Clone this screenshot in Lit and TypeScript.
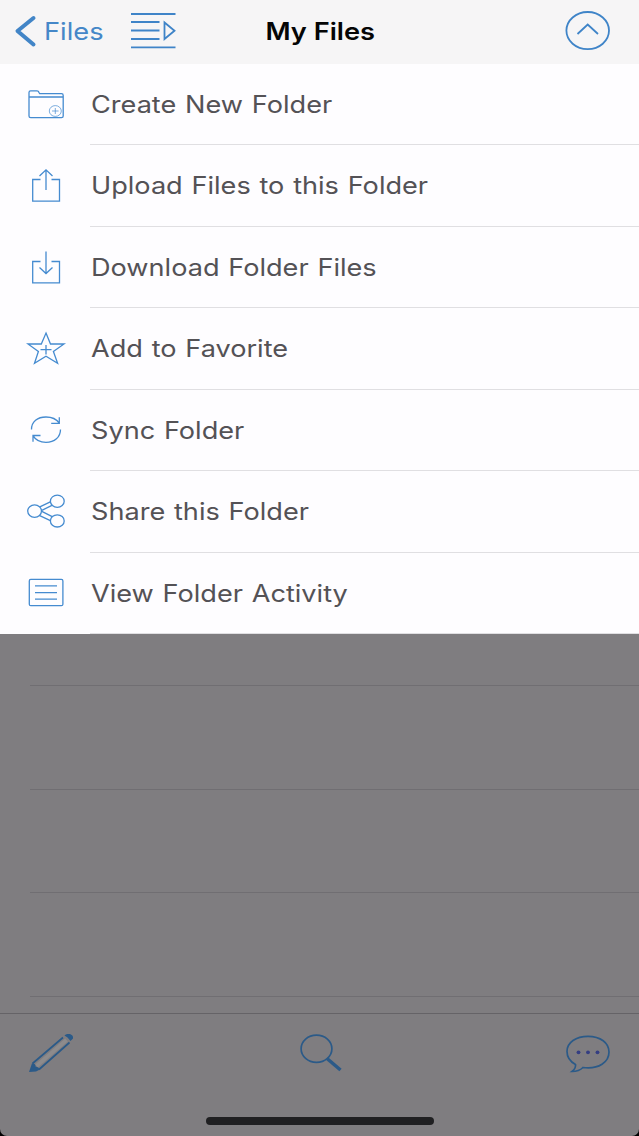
import { LitElement, html, css, svg } from 'lit';
import { customElement, property } from 'lit/decorators.js';

const icons: Record<string, unknown> = {
  create: svg`<path d="M29 97.500V92Q29 90.400 30.600 90.400H37Q38.500 90.400 39 92L39.700 93.200H61.500Q63.200 93.200 63.200 95V115.500Q63.200 117.200 61.500 117.200H30.700Q29 117.200 29 115.500ZM29 96.500H63.200"/><g stroke-width=".7"><ellipse cx="55.300" cy="110.500" rx="6" ry="5.400"/><path d="M52 110.500H58.600M55.300 107.500V113.500"/></g>`,
  upload: svg`<path d="M40.500 98H32.700V119.600H59.500V98H51.500M46 108.500V88.500M39.500 94.500L46 88.300L52.500 94.500"/>`,
  download: svg`<path d="M40.500 98H32.700V119.300H59.500V98H51.500M46 88V109.800M39.500 104L46 110L52.500 104"/>`,
  favorite: svg`<path d="M46 88.600L50.500 99.500H64L53.400 107L57.600 118.700L46 111.800L34.500 118.700L38.400 107L28 99.500H41.300ZM40.500 105.200H51.500M46 100.500V110"/>`,
  sync: svg`<path d="M31.500 103C31.500 95.200 37.500 90.500 46 90.500C52 90.500 56.500 92.700 59.300 96.700M59.300 90.700V96.900H51.200M60.500 103C60.500 110.700 54.500 115.900 46 115.900C40 115.900 35.500 113.500 33 109.200M33 115.200V109H40.500"/>`,
  share: svg`<g transform="translate(0 -.600)"><ellipse cx="34.600" cy="104.200" rx="6.900" ry="6.200"/><ellipse cx="57.300" cy="94.300" rx="6.900" ry="6.100"/><ellipse cx="57.300" cy="114" rx="6.900" ry="6.100"/><path d="M39.800 99.900L50.300 94.900M41.300 103.700L51.900 98.500M41.300 104.200L52.200 109.800M39.700 108.700L50.400 113.700"/></g>`,
  activity: svg`<rect x="29.300" y="89.900" width="33.600" height="26.300" rx="1.500"/><path d="M35 96.400H57M35 103.100H57M35 109.700H57"/>`,
};

const actions = [
  ['create', 'Create New Folder'],
  ['upload', 'Upload Files to this Folder'],
  ['download', 'Download Folder Files'],
  ['favorite', 'Add to Favorite'],
  ['sync', 'Sync Folder'],
  ['share', 'Share this Folder'],
  ['activity', 'View Folder Activity'],
];

@customElement('action-row')
export class ActionRow extends LitElement {
  @property() icon = '';
  @property() label = '';

  static styles = css`
    :host { display: flex; height: 81.5px; align-items: stretch; }
    .icon { flex: none; width: 90px; height: 80px; fill: none; stroke: #458bd0; stroke-width: 1.3; }
    .cell { flex: 1; display: flex; align-items: center; box-sizing: border-box; padding: 2px 0 0 1px; border-bottom: 1px solid #e0dfe2; }
    .label { color: #545256; font-size: 24px; line-height: 30px; word-spacing: 1px; white-space: nowrap; transform: scaleX(1.13); transform-origin: left; }
  `;

  render() {
    return html`
      <svg class="icon" viewBox="0 63.500 90 80">${icons[this.icon]}</svg>
      <div class="cell"><span class="label">${this.label}</span></div>`;
  }
}

@customElement('app-root')
export class AppRoot extends LitElement {
  static styles = css`
    :host { display: block; height: 1136px; overflow: hidden; background: #000; font-family: Inter, "Liberation Sans", sans-serif; }
    .screen { display: flex; flex-direction: column; height: 1136px; background: #7f7d80; border-radius: 0 0 7px 7px; overflow: hidden; }
    .nav { flex: none; height: 63.7px; display: grid; grid-template-columns: 1fr auto 1fr; background: #f6f5f6; }
    .left { display: flex; }
    .chevron { width: 44px; height: 63px; fill: none; stroke: #4285c7; stroke-width: 4; stroke-linecap: round; stroke-linejoin: round; }
    .back { width: 86px; color: #4587c8; font-size: 24px; line-height: 63.5px; }
    .back span, .title span { display: inline-block; transform: scaleX(1.135); transform-origin: left; }
    .queue { width: 48px; height: 63px; fill: none; stroke: #3f84c8; stroke-width: 1.8; }
    .title { color: #050505; font-size: 24px; font-weight: 600; line-height: 63.5px; padding-left: 1px; }
    .title span { transform-origin: center; }
    .collapse { width: 52px; height: 63px; justify-self: end; margin-right: 25px; fill: none; stroke: #3f84c8; stroke-width: 1.8; }
    .menu { flex: none; background: #fefdff; }
    .files { flex: 1; overflow: hidden; padding-left: 30px; }
    .file { height: 103.5px; box-sizing: border-box; border-bottom: 1px solid #706e72; }
    .file:first-child { height: 52px; }
    .toolbar { flex: none; height: 123px; box-sizing: border-box; border-top: 1px solid #656367; display: flex; flex-direction: column; }
    .tools { display: flex; justify-content: space-between; height: 80px; }
    .tool { width: 100px; height: 80px; fill: none; stroke: #2b5a88; stroke-width: 1.7; }
    .fill { fill: #2b5a88; }
    .home { width: 228px; height: 8px; margin: 23px auto 0; border-radius: 4px; background: #202022; }
  `;

  render() {
    return html`
      <div class="screen">
        <header class="nav">
          <div class="left">
            <svg class="chevron" viewBox="0 0 44 63"><path d="M33.500 18L17.500 31L33.500 44.500"/></svg>
            <div class="back"><span>Files</span></div>
            <svg class="queue" viewBox="130 0 48 63"><path d="M131 14H175.500M131 22H159.500M131 30.500H159.500M131 39H159.500M131 47.300H175.500M164.500 22.500V39L174.500 30.700Z"/></svg>
          </div>
          <div class="title"><span>My Files</span></div>
          <svg class="collapse" viewBox="562 0 52 63"><ellipse cx="587.700" cy="30.600" rx="21.300" ry="18.600"/><path d="M577.500 34L587.700 24.500L598 34"/></svg>
        </header>
        <nav class="menu">${actions.map(([icon, label]) => html`<action-row .icon=${icon} .label=${label}></action-row>`)}</nav>
        <main class="files">${[0, 1, 2, 3].map(() => html`<div class="file"></div>`)}</main>
        <footer class="toolbar">
          <div class="tools">
            <svg class="tool" viewBox="0 1014 100 80"><path stroke="#8d8b8c" stroke-width="4" d="M36.500 1066L66.500 1040"/><path d="M32.500 1063.500L63 1037.500M39 1069.500L69.500 1042.500"/><path class="fill" stroke="none" d="M29 1072L32 1063.300Q36 1063.500 35.500 1066.500Q39 1067 39.500 1069.800L36 1071.500ZM64.500 1035.500C68 1032.500 74 1034.500 73 1038.500L70.500 1041Q67.500 1036.500 64.500 1035.500Z"/></svg>
            <svg class="tool" viewBox="269.500 1014 100 80"><ellipse cx="316" cy="1048.700" rx="15.400" ry="13.600"/><path stroke-width="3.500" d="M326.500 1058.500L340 1070"/></svg>
            <svg class="tool" viewBox="539 1014 100 80"><path d="M575.500 1064.500C570 1061.500 567 1057 567 1051.500C567 1042.500 576 1036.300 588 1036.300C600.500 1036.300 609 1043 609 1052C609 1062 599 1069.500 583 1067.500C580 1070.500 576.500 1071.500 572 1071.500C574.500 1069.500 576 1067.500 575.500 1064.500Z"/><g fill="#343e82" stroke="none"><circle cx="578.500" cy="1052.300" r="1.900"/><circle cx="588" cy="1052.300" r="1.900"/><circle cx="597.500" cy="1052.300" r="1.900"/></g></svg>
          </div>
          <div class="home"></div>
        </footer>
      </div>`;
  }
}
